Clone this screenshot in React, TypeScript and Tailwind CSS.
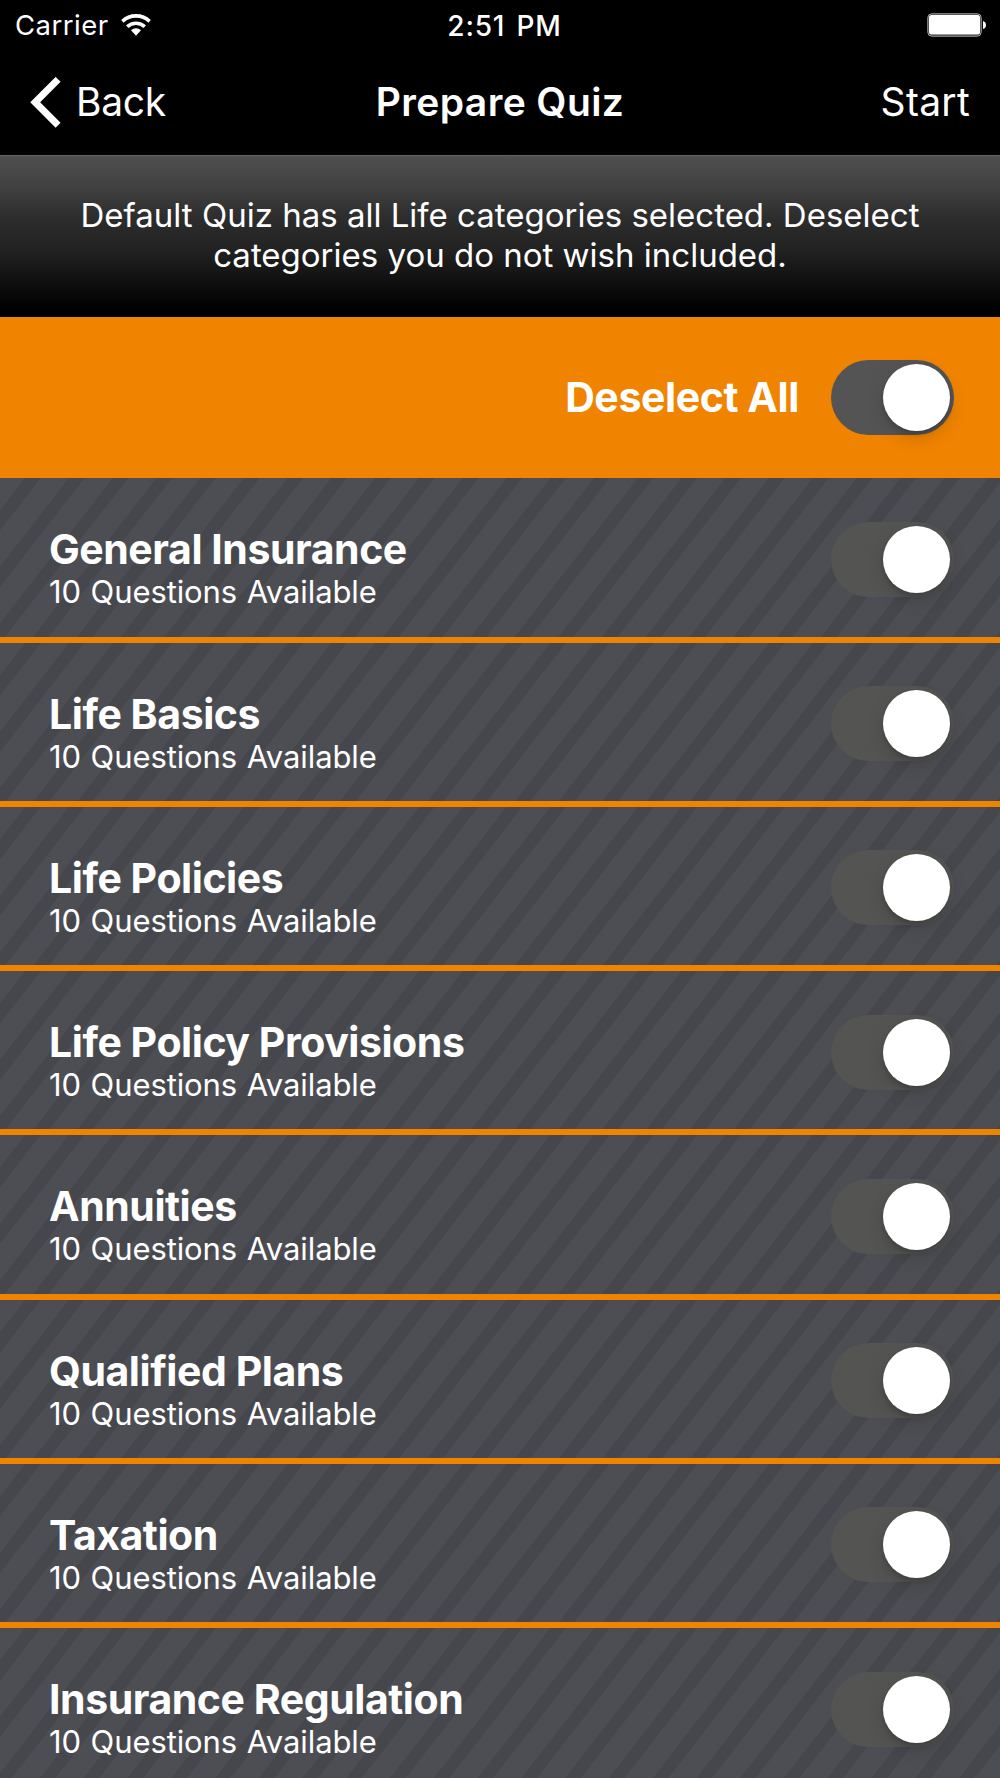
import React from "react";

const categories = [
  "General Insurance",
  "Life Basics",
  "Life Policies",
  "Life Policy Provisions",
  "Annuities",
  "Qualified Plans",
  "Taxation",
  "Insurance Regulation",
];

function Toggle({ track }: { track: string }) {
  return (
    <div className={`flex h-[75px] w-[123px] shrink-0 items-center justify-end rounded-full pr-1 ${track}`}>
      <div className="size-[67px] rounded-full bg-white shadow-[0_7px_18px_rgba(0,0,0,0.15),0_3px_4px_rgba(0,0,0,0.14)]" />
    </div>
  );
}

export default function App() {
  return (
    <div className="flex h-[1778px] w-[1000px] flex-col overflow-hidden bg-black font-['Inter',sans-serif] whitespace-nowrap text-white">
      <header className="flex h-[155px] shrink-0 flex-col">
        <div className="grid h-[50px] grid-cols-3 items-center pr-[13px] pl-[15px]">
          <div className="flex items-center gap-3">
            <span className="pt-0.5 text-[27.5px] tracking-[0.5px]">Carrier</span>
            <svg width="30" height="22" viewBox="0 0 30 22" fill="none" stroke="white" strokeWidth="3.6">
              <path d="M1.4 7.4A19.6 19.6 0 0 1 28.6 7.4" />
              <path d="M6.3 12.8A12.3 12.3 0 0 1 23.7 12.8" />
              <path d="M15 21.7L10 16.2A7.2 7.2 0 0 1 20 16.2Z" fill="white" stroke="none" />
            </svg>
          </div>
          <span className="pt-0.5 pl-[7px] text-center text-[28px] font-medium tracking-[0.8px] [word-spacing:3px]">2:51 PM</span>
          <svg className="justify-self-end" width="60" height="24" viewBox="0 0 60 24">
            <rect x="0.8" y="0.8" width="53.4" height="22.4" rx="4" fill="#333" stroke="#aaa" strokeWidth="1" />
            <rect x="2" y="2" width="51" height="19.6" rx="2.5" fill="#fff" />
            <path d="M56 8Q59 9 59 12T56 16Z" fill="#fff" />
          </svg>
        </div>
        <div className="grid h-[105px] grid-cols-3 items-center px-[30px]">
          <div className="flex items-center gap-[15px]">
            <svg width="31" height="51" viewBox="0 0 31 51" fill="none" stroke="white" strokeWidth="7">
              <path d="M28.1 2.4L5.2 25.3L28.1 48.2" />
            </svg>
            <span className="text-[39px] tracking-[-0.3px]">Back</span>
          </div>
          <span className="text-center text-[39px] font-semibold tracking-[0.4px]">Prepare Quiz</span>
          <span className="text-right text-[39px] tracking-[0.3px]">Start</span>
        </div>
      </header>
      <p className="flex h-[162px] shrink-0 items-center justify-center border-t border-[#656367] bg-[linear-gradient(#4f4f4f_0%,#404040_20%,#2d2d2d_38%,#222222_58%,#101010_78%,#010101_94%,#000000)] pb-[3px] text-center text-[33px] leading-[40px]">
        Default Quiz has all Life categories selected. Deselect
        <br />
        categories you do not wish included.
      </p>
      <div className="flex h-[161.4px] shrink-0 items-center justify-end gap-[32px] bg-[#f08300] pr-[46px]">
        <span className="text-[41px] font-bold tracking-[-0.4px]">Deselect All</span>
        <Toggle track="bg-[#545454]" />
      </div>
      <main>
        {categories.map((name) => (
          <section
            key={name}
            className="flex h-[164.27px] items-start justify-between border-b-[6px] border-[#f08300] bg-[repeating-linear-gradient(127.8deg,#4d4e53_0px,#4d4e53_19.5px,#46474c_20.1px,#46474c_31.9px,#4d4e53_32.5px,#4d4e53_34.58px)] pr-[46px] pl-[49px]"
          >
            <div className="pt-[50px]">
              <h2 className="text-[41px] leading-[42px] font-bold tracking-[-0.45px]">{name}</h2>
              <p className="text-[31px] leading-[44px] tracking-[-0.1px] [word-spacing:1px]">10 Questions Available</p>
            </div>
            <div className="pt-[43.4px]">
              <Toggle track="bg-[#545453]" />
            </div>
          </section>
        ))}
      </main>
    </div>
  );
}
